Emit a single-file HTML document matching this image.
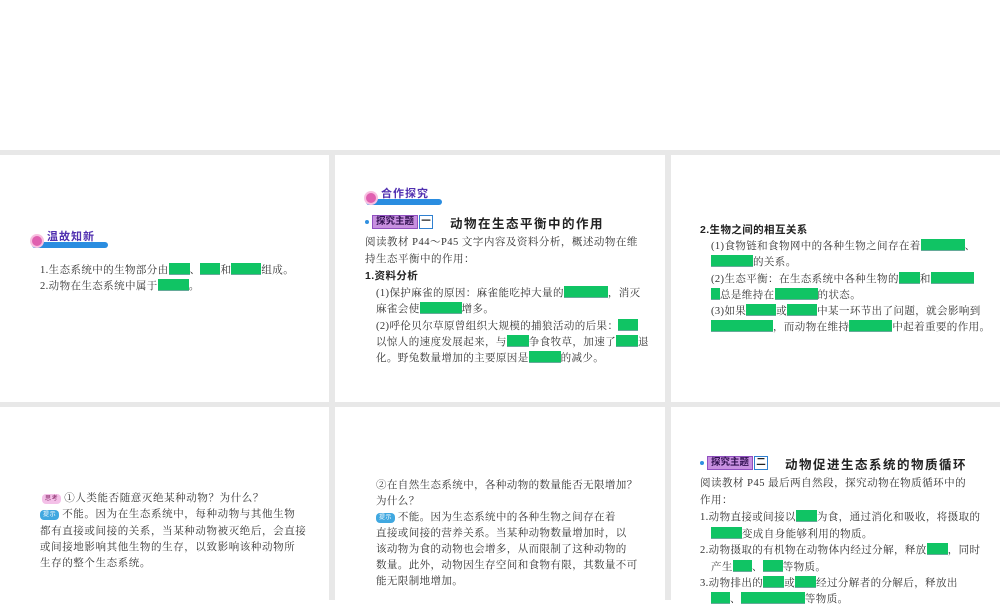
<!DOCTYPE html>
<html><head><meta charset="utf-8"><style>
*{margin:0;padding:0;box-sizing:border-box}
body{width:1000px;height:600px;background:#fff;position:relative;overflow:hidden;font-family:"Liberation Serif","Noto Serif CJK SC",serif;color:#333}
.bg{position:absolute;left:0;top:150px;width:1000px;height:450px;background:#e8e8e8}
.p{position:absolute;background:#fff}
.l{position:absolute;font-size:10.5px;line-height:14px;white-space:nowrap;letter-spacing:0.4px}
.b{font-family:"Liberation Sans","Noto Sans CJK SC",sans-serif;font-weight:bold;color:#222}
.g{display:inline-block;height:12px;background:#10c464;vertical-align:-2px;border-bottom:1px solid #6a9}
.hd{position:absolute;height:16px}
.hd .bar{position:absolute;left:2px;top:11px;height:6px;background:#2a8de0;border-radius:3px}
.hd .c{position:absolute;left:0;top:3px;width:14px;height:14px;border-radius:50%;background:#e060b0;border:2px solid #f8c0e0}
.hd .t{position:absolute;left:17px;top:-3px;font-size:11px;font-weight:bold;color:#5030b0;font-family:"Liberation Sans","Noto Sans CJK SC",sans-serif;letter-spacing:1px}
.tag{position:absolute;height:14px;font-size:9.5px;font-family:"Liberation Sans","Noto Sans CJK SC",sans-serif;font-weight:bold}
.tag .a{position:absolute;left:0;top:0;width:46px;height:14px;background:#c890e0;border:1px solid #9050c0;color:#301050;text-align:center;line-height:12px;white-space:nowrap}
.tag .n{position:absolute;left:47px;top:0;width:14px;height:14px;border:1.5px solid #3080d0;text-align:center;line-height:11px;color:#222}
.tag .d{position:absolute;left:-7px;top:5px;width:4px;height:4px;border-radius:50%;background:#3090e0}
.ti{position:absolute;font-size:12.5px;font-weight:bold;font-family:"Liberation Sans","Noto Sans CJK SC",sans-serif;letter-spacing:1.5px;color:#222}
.sk{display:inline-block;font-size:6px;line-height:8px;font-family:"Liberation Sans","Noto Sans CJK SC",sans-serif;padding:1px 3px;border-radius:4px;vertical-align:1px;margin-right:3px}
</style></head><body>
<div class="bg"></div>
<div class="p" style="left:0;top:155px;width:329px;height:247px"></div>
<div class="p" style="left:335px;top:155px;width:330px;height:247px"></div>
<div class="p" style="left:671px;top:155px;width:329px;height:247px"></div>
<div class="p" style="left:0;top:407px;width:329px;height:193px"></div>
<div class="p" style="left:335px;top:407px;width:330px;height:193px"></div>
<div class="p" style="left:671px;top:407px;width:329px;height:193px"></div>

<!-- panel 1 -->
<div class="hd" style="left:30px;top:231px;width:78px"><div class="bar" style="width:76px"></div><div class="c"></div><div class="t">温故知新</div></div>
<div class="l" style="left:40px;top:263px">1.生态系统中的生物部分由<span class="g" style="width:21px"></span>、<span class="g" style="width:20px"></span>和<span class="g" style="width:30px"></span>组成。</div>
<div class="l" style="left:40px;top:279px">2.动物在生态系统中属于<span class="g" style="width:31px"></span>。</div>

<!-- panel 2 -->
<div class="hd" style="left:364px;top:188px;width:78px"><div class="bar" style="width:76px"></div><div class="c"></div><div class="t">合作探究</div></div>
<div class="tag" style="left:372px;top:215px"><div class="d"></div><div class="a">探究主题</div><div class="n">一</div></div>
<div class="ti" style="left:450px;top:213px">动物在生态平衡中的作用</div>
<div class="l" style="left:365px;top:236px;letter-spacing:0.5px">阅读教材 P44～P45 文字内容及资料分析，概述动物在维</div>
<div class="l" style="left:365px;top:253px;letter-spacing:0.5px">持生态平衡中的作用：</div>
<div class="l b" style="left:365px;top:269px">1.资料分析</div>
<div class="l" style="left:376px;top:286px">(1)保护麻雀的原因：麻雀能吃掉大量的<span class="g" style="width:44px"></span>，消灭</div>
<div class="l" style="left:376px;top:302px">麻雀会使<span class="g" style="width:42px"></span>增多。</div>
<div class="l" style="left:376px;top:319px">(2)呼伦贝尔草原曾组织大规模的捕狼活动的后果：<span class="g" style="width:20px"></span></div>
<div class="l" style="left:376px;top:335px">以惊人的速度发展起来，与<span class="g" style="width:22px"></span>争食牧草，加速了<span class="g" style="width:22px"></span>退</div>
<div class="l" style="left:376px;top:351px">化。野兔数量增加的主要原因是<span class="g" style="width:32px"></span>的减少。</div>

<!-- panel 3 -->
<div class="l b" style="left:700px;top:223px">2.生物之间的相互关系</div>
<div class="l" style="left:711px;top:239px">(1)食物链和食物网中的各种生物之间存在着<span class="g" style="width:44px"></span>、</div>
<div class="l" style="left:711px;top:255px"><span class="g" style="width:42px"></span>的关系。</div>
<div class="l" style="left:711px;top:272px">(2)生态平衡：在生态系统中各种生物的<span class="g" style="width:21px"></span>和<span class="g" style="width:43px"></span></div>
<div class="l" style="left:711px;top:288px"><span class="g" style="width:9px"></span>总是维持在<span class="g" style="width:43px"></span>的状态。</div>
<div class="l" style="left:711px;top:304px">(3)如果<span class="g" style="width:30px"></span>或<span class="g" style="width:30px"></span>中某一环节出了问题，就会影响到</div>
<div class="l" style="left:711px;top:320px"><span class="g" style="width:62px"></span>，而动物在维持<span class="g" style="width:43px"></span>中起着重要的作用。</div>

<!-- panel 4 -->
<div class="l" style="left:42px;top:492px;letter-spacing:0.6px"><span class="sk" style="background:#f4c0e8;color:#802060">思考</span>①人类能否随意灭绝某种动物？为什么？</div>
<div class="l" style="left:40px;top:508px;letter-spacing:0.6px"><span class="sk" style="background:#40a8e0;color:#fff">提示</span>不能。因为在生态系统中，每种动物与其他生物</div>
<div class="l" style="left:40px;top:525px;letter-spacing:0.6px">都有直接或间接的关系，当某种动物被灭绝后，会直接</div>
<div class="l" style="left:40px;top:541px;letter-spacing:0.6px">或间接地影响其他生物的生存，以致影响该种动物所</div>
<div class="l" style="left:40px;top:557px;letter-spacing:0.6px">生存的整个生态系统。</div>

<!-- panel 5 -->
<div class="l" style="left:376px;top:479px;letter-spacing:0.4px">②在自然生态系统中，各种动物的数量能否无限增加？</div>
<div class="l" style="left:376px;top:495px;letter-spacing:0.4px">为什么？</div>
<div class="l" style="left:376px;top:511px;letter-spacing:0.4px"><span class="sk" style="background:#40a8e0;color:#fff">提示</span>不能。因为生态系统中的各种生物之间存在着</div>
<div class="l" style="left:376px;top:527px;letter-spacing:0.4px">直接或间接的营养关系。当某种动物数量增加时，以</div>
<div class="l" style="left:376px;top:543px;letter-spacing:0.4px">该动物为食的动物也会增多，从而限制了这种动物的</div>
<div class="l" style="left:376px;top:559px;letter-spacing:0.4px">数量。此外，动物因生存空间和食物有限，其数量不可</div>
<div class="l" style="left:376px;top:575px;letter-spacing:0.4px">能无限制地增加。</div>

<!-- panel 6 -->
<div class="tag" style="left:707px;top:456px"><div class="d"></div><div class="a">探究主题</div><div class="n">二</div></div>
<div class="ti" style="left:785px;top:454px">动物促进生态系统的物质循环</div>
<div class="l" style="left:700px;top:477px;letter-spacing:0.5px">阅读教材 P45 最后两自然段，探究动物在物质循环中的</div>
<div class="l" style="left:700px;top:494px;letter-spacing:0.5px">作用：</div>
<div class="l" style="left:700px;top:510px">1.动物直接或间接以<span class="g" style="width:21px"></span>为食，通过消化和吸收，将摄取的</div>
<div class="l" style="left:711px;top:527px"><span class="g" style="width:31px"></span>变成自身能够利用的物质。</div>
<div class="l" style="left:700px;top:543px">2.动物摄取的有机物在动物体内经过分解，释放<span class="g" style="width:21px"></span>，同时</div>
<div class="l" style="left:711px;top:560px">产生<span class="g" style="width:19px"></span>、<span class="g" style="width:20px"></span>等物质。</div>
<div class="l" style="left:700px;top:576px">3.动物排出的<span class="g" style="width:21px"></span>或<span class="g" style="width:21px"></span>经过分解者的分解后，释放出</div>
<div class="l" style="left:711px;top:592px"><span class="g" style="width:19px"></span>、<span class="g" style="width:64px"></span>等物质。</div>
</body></html>
